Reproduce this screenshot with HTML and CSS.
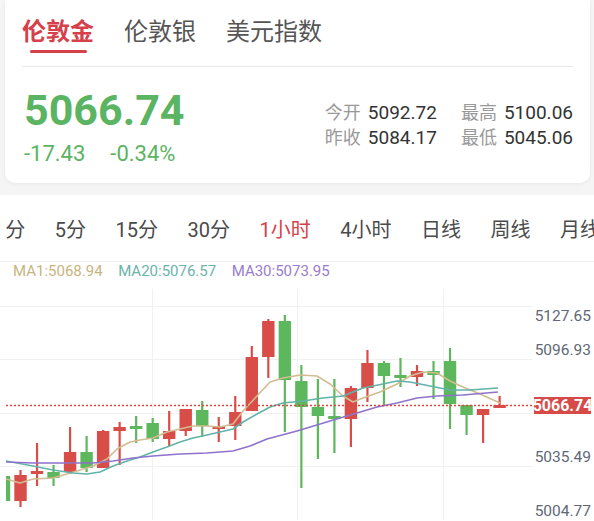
FILE: index.html
```html
<!DOCTYPE html>
<html lang="zh-CN">
	<head>
		<meta charset="UTF-8" />
		<meta name="viewport" content="width=device-width, initial-scale=1.0" />
		<title>伦敦金行情</title>
		<link rel="stylesheet" href="styles.css">
	</head>
	<body>
		<div class="top">
			<div class="card">
				<div class="tabs">
					<div class="tab active">伦敦金</div>
					<div class="tab">伦敦银</div>
					<div class="tab">美元指数</div>
				</div>
				<div class="quote">
					<div class="price-block">
						<div class="price">5066.74</div>
						<div class="change">
							<span>-17.43</span>
							<span>-0.34%</span>
						</div>
					</div>
					<div class="stats">
						<div class="stat"><span class="key">今开</span><span class="val">5092.72</span></div>
						<div class="stat"><span class="key">最高</span><span class="val">5100.06</span></div>
						<div class="stat"><span class="key">昨收</span><span class="val">5084.17</span></div>
						<div class="stat"><span class="key">最低</span><span class="val">5045.06</span></div>
					</div>
				</div>
			</div>
		</div>

		<div class="periods">
			<div class="period-list">
				<span class="period">1分</span>
				<span class="period">5分</span>
				<span class="period">15分</span>
				<span class="period">30分</span>
				<span class="period active">1小时</span>
				<span class="period">4小时</span>
				<span class="period">日线</span>
				<span class="period">周线</span>
				<span class="period">月线</span>
			</div>
		</div>

		<div class="chart">
			<div class="legend">
				<span class="ma1">MA1:5068.94</span>
				<span class="ma20">MA20:5076.57</span>
				<span class="ma30">MA30:5073.95</span>
			</div>
			<svg id="kline" class="kline" width="594" height="231" viewBox="0 290 594 231">
				<defs>
					<clipPath id="plotArea">
						<rect x="6" y="290" width="528" height="231" />
					</clipPath>
				</defs>
				<g class="grid">
					<line x1="0" x2="533" y1="307.5" y2="307.5" />
					<line x1="0" x2="533" y1="360.5" y2="360.5" />
					<line x1="0" x2="533" y1="414.5" y2="414.5" />
					<line x1="0" x2="533" y1="467.5" y2="467.5" />
					<line x1="152.5" x2="152.5" y1="290" y2="521" />
					<line x1="297.5" x2="297.5" y1="290" y2="521" />
					<line x1="443.5" x2="443.5" y1="290" y2="521" />
				</g>
				<g id="plot" clip-path="url(#plotArea)"></g>
				<line class="last-line" x1="6" x2="534" y1="406.5" y2="406.5" />
				<g class="axis">
					<text x="591" y="322">5127.65</text>
					<text x="591" y="356">5096.93</text>
					<text x="591" y="463">5035.49</text>
					<text x="591" y="517">5004.77</text>
				</g>
				<rect class="last-tag" x="534" y="398" width="57" height="17" />
				<text class="last-text" x="562.5" y="412">5066.74</text>
			</svg>
		</div>

		<script>
			// 캔들: [몸통 위, 몸통 아래, 꼬리 위, 꼬리 아래, 색]
			const candles = [
				[477, 502, 477, 502, 'g'], [476, 502, 471, 508, 'r'], [472, 475, 444, 487, 'r'],
				[473, 479, 466, 487, 'g'], [453, 473, 428, 475, 'r'], [453, 469, 437, 473, 'g'],
				[432, 469, 431, 469, 'r'], [428, 432, 423, 466, 'r'], [427, 430, 417, 444, 'g'],
				[424, 440, 419, 443, 'g'], [432, 440, 412, 447, 'r'], [410, 432, 410, 437, 'r'],
				[411, 427, 402, 438, 'g'], [427, 430, 418, 443, 'r'], [413, 427, 397, 441, 'r'],
				[358, 412, 347, 412, 'r'], [322, 358, 320, 379, 'r'], [322, 381, 316, 433, 'g'],
				[382, 408, 366, 489, 'g'], [408, 417, 380, 460, 'g'], [417, 420, 380, 454, 'g'],
				[389, 420, 387, 448, 'r'], [364, 389, 351, 403, 'r'], [364, 377, 362, 406, 'g'],
				[376, 379, 359, 388, 'g'], [372, 378, 366, 387, 'r'], [372, 376, 362, 400, 'g'],
				[362, 405, 349, 430, 'g'], [406, 416, 406, 436, 'g'], [410, 416, 410, 444, 'r'],
				[406, 409, 397, 409, 'r'],
			];

			const maLines = {
				'#d2bc91': [[6, 480], [20, 484], [33, 480], [53, 479], [67, 475], [80, 471], [93, 467], [107, 460], [117, 450], [130, 443], [140, 441], [153, 439], [167, 433], [180, 430], [193, 427], [207, 427], [220, 428], [233, 425], [243, 412], [257, 397], [270, 383], [283, 379], [300, 376], [317, 377], [330, 385], [343, 397], [353, 403], [363, 399], [380, 393], [397, 385], [410, 377], [423, 373], [437, 374], [450, 382], [463, 388], [480, 395], [500, 404]],
				'#62b3a9': [[6, 462], [33, 467], [53, 471], [73, 474], [87, 475], [100, 473], [113, 467], [127, 462], [140, 458], [153, 453], [167, 448], [180, 443], [193, 439], [207, 436], [220, 433], [233, 430], [243, 423], [257, 415], [270, 408], [283, 404], [303, 402], [323, 399], [343, 397], [363, 389], [383, 385], [397, 382], [410, 383], [430, 387], [450, 391], [470, 391], [498, 389]],
				'#8f72cc': [[6, 463], [33, 464], [67, 464], [93, 464], [113, 462], [133, 459], [153, 457], [180, 455], [207, 454], [220, 453], [233, 452], [250, 447], [267, 440], [297, 432], [330, 422], [357, 414], [377, 408], [397, 404], [417, 399], [437, 397], [463, 396], [498, 393]],
			};

			const NS = 'http://www.w3.org/2000/svg';
			const plot = document.getElementById('plot');

			function addShape(name, attrs) {
				const node = document.createElementNS(NS, name);
				Object.keys(attrs).forEach((key) => node.setAttribute(key, attrs[key]));
				plot.appendChild(node);
			}

			candles.forEach((c, i) => {
				const x = 4 + i * 16.52;
				const color = c[4] === 'r' ? '#d94d49' : '#5db75d';
				addShape('line', { x1: x, x2: x, y1: c[2], y2: c[3], stroke: color, 'stroke-width': 2.2 });
				addShape('rect', { x: x - 6.2, y: c[0], width: 12.4, height: Math.max(c[1] - c[0], 3), fill: color });
			});

			Object.keys(maLines).forEach((color) => {
				addShape('polyline', {
					points: maLines[color].map((p) => p.join(',')).join(' '),
					fill: 'none',
					stroke: color,
					'stroke-width': 1.6,
					'stroke-linejoin': 'round',
				});
			});
		</script>
	</body>
</html>
```

FILE: styles.css
```css
/* 기본 스타일 */
body {
	margin: 0;
	width: 594px;
	height: 521px;
	overflow: hidden;
	background: #ffffff;
	font-family: Roboto, 'Noto Sans CJK SC', sans-serif;
	color: #333;
}

.top {
	background: #f5f5f5;
	padding-bottom: 12px;
}

.card {
	margin: 0 4px 0 5px;
	padding: 0 17px;
	background: #ffffff;
	border-radius: 0 0 10px 10px;
	box-shadow: 0 1px 4px rgba(0, 0, 0, 0.06);
}

.tabs {
	display: flex;
	gap: 30px;
	height: 67px;
	box-sizing: border-box;
	padding-top: 16px;
	border-bottom: 1px solid #e8e8e8;
}

.tab {
	font-size: 24px;
	line-height: 32px;
	color: #555;
}

.tab.active {
	color: #d6404a;
	font-weight: bold;
}

.tab.active::after {
	content: '';
	display: block;
	width: 57px;
	height: 3px;
	margin: 2px auto 0;
	border-radius: 2px;
	background: #d6404a;
}

.quote {
	display: flex;
	justify-content: space-between;
	align-items: flex-start;
	height: 116px;
	box-sizing: border-box;
	padding: 18px 0 0 2px;
}

.price {
	font-size: 43px;
	line-height: 50px;
	font-weight: bold;
	color: #5bb461;
}

.change {
	display: flex;
	gap: 25px;
	margin-top: 6px;
	font-size: 22px;
	line-height: 26px;
	color: #5bb461;
}

.stats {
	display: grid;
	grid-template-columns: auto auto;
	column-gap: 24px;
	margin-top: 15px;
}

.stat {
	display: flex;
	align-items: baseline;
	gap: 7px;
	line-height: 25px;
}

.stat .key {
	font-size: 18px;
	color: #999;
}

.stat .val {
	font-size: 19px;
	color: #333;
}

.periods {
	height: 66px;
	margin-left: 4px;
	overflow: hidden;
	display: flex;
	align-items: center;
	box-sizing: border-box;
	padding-top: 4px;
}

.period-list {
	display: flex;
	gap: 29.5px;
	margin-left: -10px;
	white-space: nowrap;
}

.period {
	font-size: 20px;
	line-height: 24px;
	color: #4a4a4a;
}

.period.active {
	color: #d6404a;
}

.chart {
	border-top: 1px solid #f0f0f0;
}

.legend {
	display: flex;
	gap: 15.5px;
	height: 27px;
	padding-left: 13px;
	font-size: 15px;
	line-height: 18px;
}

.ma1 {
	color: #c9b47f;
}

.ma20 {
	color: #6db3aa;
}

.ma30 {
	color: #9a7ccb;
}

.kline {
	display: block;
}

.grid line {
	stroke: #f1f1f1;
	stroke-width: 1;
}

.last-line {
	stroke: #e0443f;
	stroke-width: 1.5;
	stroke-dasharray: 2 2;
}

.axis text {
	font-size: 15.5px;
	fill: #5f6876;
	text-anchor: end;
}

.last-tag {
	fill: #d64a47;
}

.last-text {
	font-size: 16px;
	font-weight: bold;
	fill: #ffffff;
	text-anchor: middle;
}
```
